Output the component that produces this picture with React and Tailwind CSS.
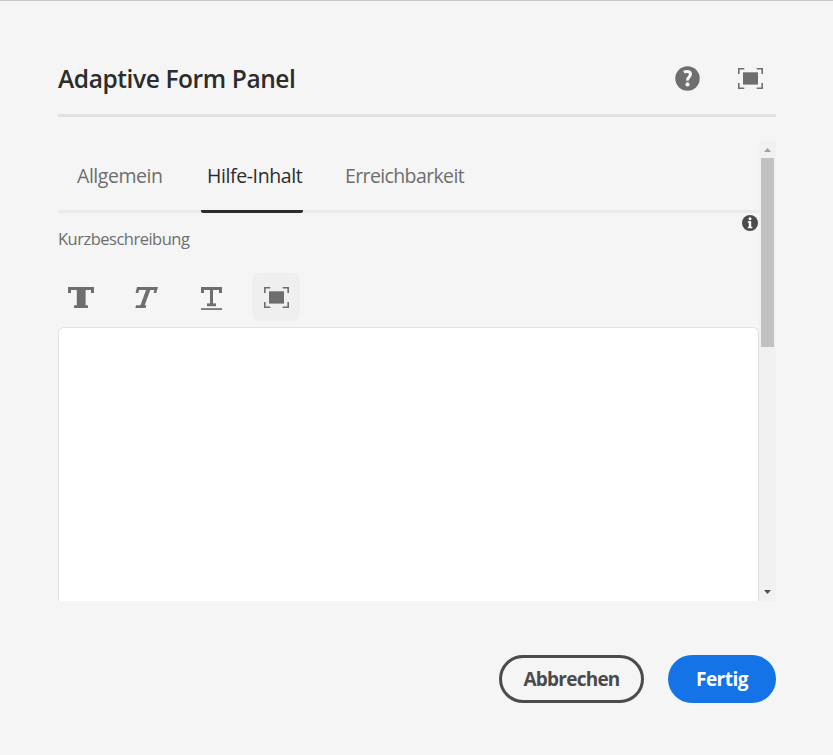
function HelpIcon() {
  return (
    <svg className="h-[25px] w-[25px]" viewBox="0 0 25 25">
      <circle cx="12.5" cy="12.5" r="12.2" fill="#6e6e6e" />
      <path d="M8.9 6.2C10.4 5.1 15.5 4.7 15.5 8.1c0 3-3.3 3.1-3.1 6.5" fill="none" stroke="#f5f5f5" strokeWidth="3" />
      <circle cx="12.5" cy="18.4" r="2.1" fill="#f5f5f5" />
    </svg>
  );
}

function FullscreenIcon() {
  return (
    <svg className="h-[21px] w-[25px]" viewBox="0 0 25 21">
      <path d="M.8 6V.8h5.5M18.7.8h5.5V6M24.2 15v5.2h-5.5M6.3 20.2H.8V15" fill="none" stroke="#6e6e6e" strokeWidth="1.6" />
      <rect x="5" y="4.3" width="15" height="12.3" fill="#6e6e6e" />
    </svg>
  );
}

function InfoIcon() {
  return (
    <svg className="h-4 w-4" viewBox="0 0 16 16">
      <circle cx="8" cy="8" r="8" fill="#4b4b4b" />
      <circle cx="8" cy="3.7" r="1.5" fill="#fff" />
      <path d="M5.8 7.1h2.4v5M5.8 12.4h4.5" fill="none" stroke="#fff" strokeWidth="1.5" />
      <path d="M8 6.4v6" stroke="#fff" strokeWidth="2.4" />
    </svg>
  );
}

function BoldIcon() {
  return (
    <svg className="h-[21px] w-[26px]" viewBox="0 0 26 21" fill="#6e6e6e">
      <rect width="26" height="3" />
      <rect width="3" height="6" />
      <rect x="23" width="3" height="6" />
      <rect x="8.8" width="8.8" height="21" />
      <rect x="6" y="18.3" width="14" height="2.7" rx=".5" />
    </svg>
  );
}

function ItalicIcon() {
  return (
    <svg className="ml-px h-[21px] w-[23px]" viewBox="0 0 23 21" fill="#6e6e6e">
      <path d="M2 0h21l-1.8 6h-2.6l.8-3H4.1l-.8 3H.5z" />
      <path d="M11.4 2h4.2L9.4 19H5.2z" />
      <path d="M1.1 18.3h10.2l-.7 2.7H.4z" />
    </svg>
  );
}

function UnderlineIcon() {
  return (
    <svg className="mt-[2px] h-[23px] w-[21px]" viewBox="0 0 21 23" fill="#6e6e6e">
      <rect width="21" height="3" />
      <rect width="3" height="6" />
      <rect x="18" width="3" height="6" />
      <rect x="9" width="3" height="18" />
      <rect x="6" y="16.4" width="9" height="2.8" />
      <rect y="21.2" width="21" height="1.7" />
    </svg>
  );
}

function Tool({ label, children }) {
  return (
    <button aria-label={label} className="flex h-12 w-12 items-center justify-center">
      {children}
    </button>
  );
}

export default function App() {
  return (
    <div className="flex h-[755px] w-[833px] flex-col border-t border-[#c8c8c8] bg-[#f5f5f5] pr-[57px] pl-[58px] font-['Open_Sans','Noto_Sans',sans-serif] text-[#6e6e6e]">
      <header className="flex h-[116px] shrink-0 items-start border-b-3 border-[#e1e1e1]">
        <h1 className="mt-[60px] flex-1 text-[24.5px] leading-9 font-semibold tracking-[-0.4px] whitespace-nowrap text-[#2c2c2c]">Adaptive Form Panel</h1>
        <button aria-label="Hilfe" className="mt-[65px] mr-[38px]"><HelpIcon /></button>
        <button aria-label="Vollbild" className="mt-[67px] mr-[13px]"><FullscreenIcon /></button>
      </header>

      <div className="mt-6 flex h-[460px] shrink-0 overflow-hidden">
        <main className="flex w-[701px] flex-col">
          <nav className="flex h-[72px] shrink-0 border-b-3 border-[#eaeaea] text-[19.5px] leading-[70px] whitespace-nowrap">
            <button className="ml-[19px] h-[69px] w-[124px] text-left tracking-[-0.45px]">Allgemein</button>
            <button className="h-[72px] w-[102px] rounded-b-xs border-b-3 border-[#2c2c2c] pl-[6px] text-left tracking-[-0.4px] text-[#2c2c2c]">Hilfe-Inhalt</button>
            <button className="ml-[42px] h-[69px] text-left tracking-[-0.62px]">Erreichbarkeit</button>
          </nav>
          <div className="flex h-[60px] shrink-0 justify-between">
            <label className="mt-[14px] text-[16.5px] leading-6 tracking-[-0.5px]">Kurzbeschreibung</label>
            <button aria-label="Information" className="mt-[1.5px] mr-[1px] h-4"><InfoIcon /></button>
          </div>
          <div className="-ml-px flex h-[54px] shrink-0 gap-[17px]">
            <Tool label="Fett"><BoldIcon /></Tool>
            <Tool label="Kursiv"><ItalicIcon /></Tool>
            <Tool label="Unterstrichen"><UnderlineIcon /></Tool>
            <button aria-label="Editor maximieren" className="flex h-12 w-12 items-center justify-center rounded-md bg-[#efefef]"><FullscreenIcon /></button>
          </div>
          <div className="min-h-0 flex-1 rounded-t-md border border-b-0 border-[#e1e1e1] bg-white" />
        </main>
        <div className="flex w-[17px] flex-col items-center bg-[#f1f1f1]">
          <svg className="h-[17px] w-[17px]" viewBox="0 0 17 17"><path d="M5 11h7L8.5 7z" fill="#a3a3a3" /></svg>
          <div className="h-[189px] w-[13px] bg-[#c1c1c1]" />
          <svg className="mt-auto h-[17px] w-[17px]" viewBox="0 0 17 17"><path d="M5 6h7l-3.5 4z" fill="#505050" /></svg>
        </div>
      </div>

      <footer className="mt-[54px] flex justify-end gap-6 text-[19px] font-bold whitespace-nowrap">
        <button className="h-12 w-[145px] rounded-full border-3 border-[#4b4b4b] tracking-[-0.75px] text-[#4b4b4b]">Abbrechen</button>
        <button className="h-12 w-[108px] rounded-full bg-[#1473e6] tracking-[-0.5px] text-white">Fertig</button>
      </footer>
    </div>
  );
}
